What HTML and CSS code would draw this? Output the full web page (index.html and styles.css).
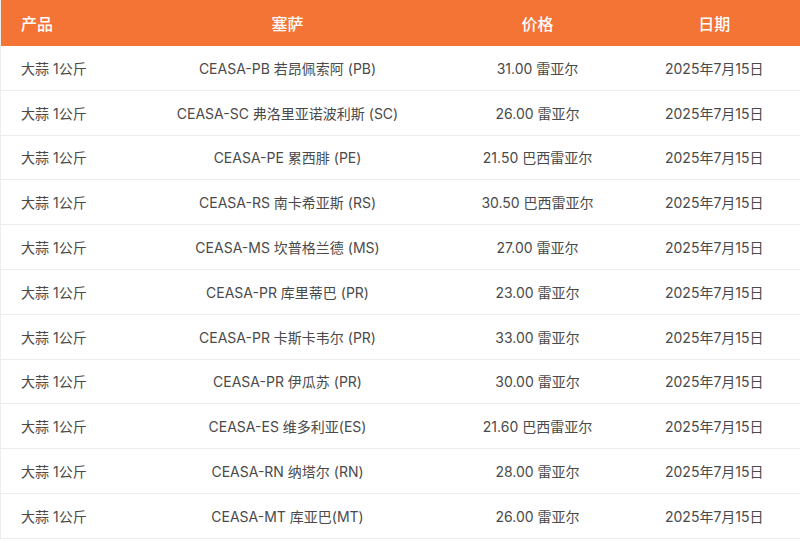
FILE: index.html
```html
<!DOCTYPE html>
<html lang="zh">
<head>
<meta charset="utf-8">
<link rel="stylesheet" href="styles.css">
</head>
<body>
<table class="price-table">
  <colgroup>
    <col class="c1"><col class="c2"><col class="c3"><col class="c4">
  </colgroup>
  <thead>
    <tr><th class="left">产品</th><th>塞萨</th><th>价格</th><th>日期</th></tr>
  </thead>
  <tbody>
    <tr><td class="left">大蒜 1公斤</td><td>CEASA-PB 若昂佩索阿 (PB)</td><td>31.00 雷亚尔</td><td>2025年7月15日</td></tr>
    <tr><td class="left">大蒜 1公斤</td><td>CEASA-SC 弗洛里亚诺波利斯 (SC)</td><td>26.00 雷亚尔</td><td>2025年7月15日</td></tr>
    <tr><td class="left">大蒜 1公斤</td><td>CEASA-PE 累西腓 (PE)</td><td>21.50 巴西雷亚尔</td><td>2025年7月15日</td></tr>
    <tr><td class="left">大蒜 1公斤</td><td>CEASA-RS 南卡希亚斯 (RS)</td><td>30.50 巴西雷亚尔</td><td>2025年7月15日</td></tr>
    <tr><td class="left">大蒜 1公斤</td><td>CEASA-MS 坎普格兰德 (MS)</td><td>27.00 雷亚尔</td><td>2025年7月15日</td></tr>
    <tr><td class="left">大蒜 1公斤</td><td>CEASA-PR 库里蒂巴 (PR)</td><td>23.00 雷亚尔</td><td>2025年7月15日</td></tr>
    <tr><td class="left">大蒜 1公斤</td><td>CEASA-PR 卡斯卡韦尔 (PR)</td><td>33.00 雷亚尔</td><td>2025年7月15日</td></tr>
    <tr><td class="left">大蒜 1公斤</td><td>CEASA-PR 伊瓜苏 (PR)</td><td>30.00 雷亚尔</td><td>2025年7月15日</td></tr>
    <tr><td class="left">大蒜 1公斤</td><td>CEASA-ES 维多利亚(ES)</td><td>21.60 巴西雷亚尔</td><td>2025年7月15日</td></tr>
    <tr><td class="left">大蒜 1公斤</td><td>CEASA-RN 纳塔尔 (RN)</td><td>28.00 雷亚尔</td><td>2025年7月15日</td></tr>
    <tr><td class="left">大蒜 1公斤</td><td>CEASA-MT 库亚巴(MT)</td><td>26.00 雷亚尔</td><td>2025年7月15日</td></tr>
  </tbody>
</table>
</body>
</html>
```

FILE: styles.css
```css
html, body {
  margin: 0;
  padding: 0;
  background: #fff;
}
body {
  font-family: Inter, "Noto Sans CJK SC", sans-serif;
  color: #4a4a4a;
}
.price-table {
  width: 800px;
  border-collapse: collapse;
  table-layout: fixed;
  border-left: 1px solid #ececec;
  border-right: 1px solid #ececec;
}
.c1 { width: 128px; }
.c2 { width: 318px; }
.c3 { width: 182px; }
.c4 { width: 172px; }
.price-table th {
  background: #f37435;
  color: #fff;
  font-size: 16px;
  font-weight: 500;
  height: 46px;
  padding: 0 10px;
  text-align: center;
}
.price-table td {
  font-size: 14px;
  height: 43.8px;
  padding: 0 10px;
  text-align: center;
  border-bottom: 1px solid #ececec;
  white-space: nowrap;
}
.price-table .left {
  text-align: left;
  padding-left: 20px;
}
```
